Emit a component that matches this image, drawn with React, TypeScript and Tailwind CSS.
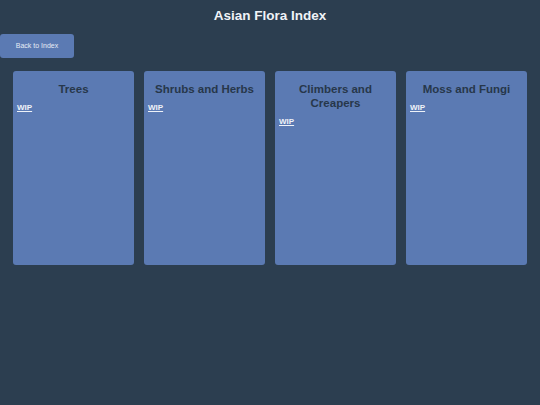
import React from 'react';

const sections = ['Trees', 'Shrubs and Herbs', 'Climbers and Creapers', 'Moss and Fungi'];

export default function App() {
    return (
        <div className="w-[540px] h-[405px] bg-[#2c3e50] font-['Liberation_Sans',Arial,sans-serif] overflow-hidden">
            <h1 className="text-center text-[#f0f3f7] font-bold text-[13.5px] leading-[18px] pt-[7px]">
                Asian Flora Index
            </h1>

            <button className="mt-[9px] w-[74px] h-[24px] bg-[#5b7ab3] text-[#e6ecf5] text-[7px] rounded-[3px] block">
                Back to Index
            </button>

            <div className="flex gap-[10px] px-[13px] mt-[13px]">
                {sections.map((name) => (
                    <div
                        key={name}
                        className="w-[121px] h-[194px] bg-[#5b7ab3] rounded-[3px] px-[4px] pt-[11px]"
                    >
                        <h2 className="text-center text-[#27374a] font-bold text-[11.5px] leading-[14px] mb-[7px]">
                            {name}
                        </h2>
                        <a className="text-[8px] font-bold text-[#eef2f8] underline leading-[10px] block">WIP</a>
                    </div>
                ))}
            </div>
        </div>
    );
}
